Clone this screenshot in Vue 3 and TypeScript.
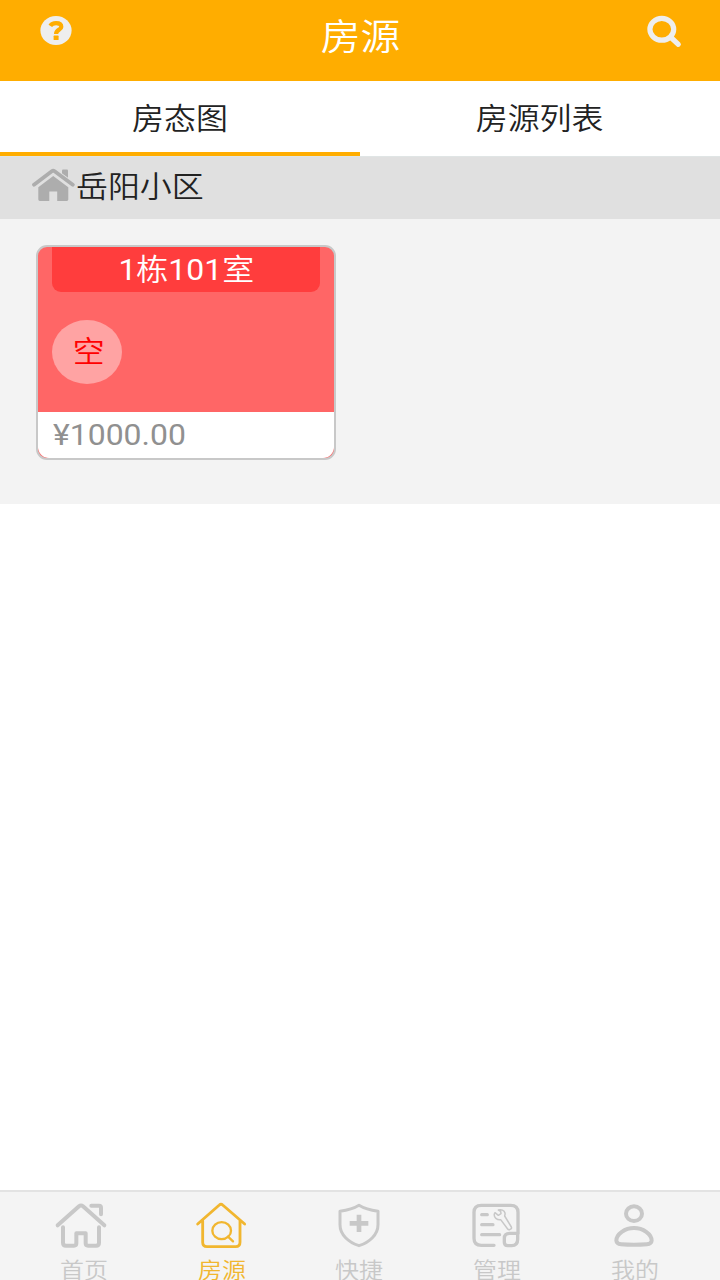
<script setup lang="ts">
interface NavItem {
  id: string
  label: string
  active: boolean
}

const tabs: string[] = ['房态图', '房源列表']
const nav: NavItem[] = [
  { id: 'home', label: '首页', active: false },
  { id: 'listing', label: '房源', active: true },
  { id: 'quick', label: '快捷', active: false },
  { id: 'manage', label: '管理', active: false },
  { id: 'mine', label: '我的', active: false },
]
</script>

<template>
  <div class="screen">
    <header class="header">
      <svg class="help" viewBox="0 0 32 30" preserveAspectRatio="none">
        <ellipse cx="16" cy="15.4" rx="15.6" ry="14.5" fill="#eeeeee" />
        <path d="M10.3 10.8C11.5 8.9 13.6 8.1 16.1 8.1C19.1 8.1 21.3 9.4 21.3 11.9C21.3 15 16.1 14.4 16.1 19" fill="none" stroke="#ffad00" stroke-width="4.2" />
        <rect x="13.6" y="20.6" width="5" height="4.5" rx="0.6" fill="#ffad00" />
      </svg>
      <h1 class="title"><span class="wide">房源</span></h1>
      <svg class="search" viewBox="0 0 36 34">
        <g fill="none" stroke="#eeeeee" stroke-width="5.2">
          <ellipse cx="14.8" cy="14.3" rx="11.9" ry="10.9" />
          <path d="M24 22.5L31.3 29.3" stroke-linecap="round" />
        </g>
      </svg>
    </header>

    <nav class="tabs">
      <div v-for="(tab, i) in tabs" :key="tab" class="tab" :class="{ selected: i === 0 }">
        <span class="wide">{{ tab }}</span>
      </div>
    </nav>

    <section class="community">
      <svg class="house" viewBox="0 0 44 34">
        <path d="M30 2.5Q30 1.5 31 1.5H35Q36 1.5 36 2.5V12L30 7Z" fill="#adadad" />
        <path d="M6.3 19.3L21.2 8.1L36.3 19.3V31.5Q36.3 32.9 34.8 32.9H25.2V23.5H17.3V32.9H7.8Q6.3 32.9 6.3 31.5Z" fill="#adadad" />
        <path d="M2 16.7L19.8 3.2Q21.2 2.2 22.6 3.2L40.8 16.7" fill="none" stroke="#e0e0e0" stroke-width="5.6" />
        <path d="M2 16.7L19.8 3.2Q21.2 2.2 22.6 3.2L40.8 16.7" fill="none" stroke="#adadad" stroke-width="3.8" stroke-linejoin="round" stroke-linecap="round" />
      </svg>
      <span class="wide left">岳阳小区</span>
    </section>

    <main class="rooms">
      <article class="card">
        <div class="room-name"><span class="wide"><span class="number">1</span>栋<span class="number">101</span>室</span></div>
        <div class="status"><span class="wide">空</span></div>
        <div class="price"><span class="wide left number">¥1000.00</span></div>
      </article>
    </main>

    <footer class="bottom">
      <div v-for="item in nav" :key="item.id" class="nav-item" :class="[item.id, { active: item.active }]">
        <svg v-if="item.id === 'home'" viewBox="72 60 162 150">
          <g stroke-width="12">
            <path d="M83 136L147 79Q153 74 159 79L223 136M184 77H207Q213 77 213 83V103" />
            <path d="M99 142V188Q99 197 108 197H132Q139 197 139 190V160H167V190Q167 197 174 197H198Q207 197 207 188V142" />
          </g>
        </svg>
        <svg v-else-if="item.id === 'listing'" viewBox="493 60 162 150">
          <g stroke-width="8.5">
            <path d="M504 132L569 75Q574 70 579 75L645 132M519 123V187Q519 200 532 200H618Q631 200 631 187V123" />
            <ellipse cx="576" cy="152" rx="28" ry="25.5" stroke-width="7" />
            <path d="M595 170L610 184" stroke-width="7" />
          </g>
        </svg>
        <svg v-else-if="item.id === 'quick'" viewBox="65 60 162 150">
          <path d="M146 76Q167 89 203 94V134C203 164 177 187 146 197C115 187 89 164 89 134V94Q125 89 146 76Z" stroke-width="9" />
          <path class="plus" d="M118 130H174M146 104V156" stroke-width="14" />
        </svg>
        <svg v-else-if="item.id === 'manage'" viewBox="476 60 162 150">
          <path d="M551 196H513Q491 196 491 175V97Q491 76 513 76H601Q623 76 623 97V160" stroke-width="10" />
          <path d="M514 104H531M514 134H548M514 164H568" stroke-width="9.5" />
          <path d="M598 160H622V178Q622 197 604 197H592Q582 197 582 187V175Q582 160 598 160Z" stroke-width="10" />
          <path d="M564 90C572 87 582 91 584 99C585 103 583 106 583 108L603 141Q605 145 601 147L598 149Q594 150 592 147L571 119C560 120 550 113 552 102L554 98L564 106L572 101L571 94Z" stroke-width="4.5" />
        </svg>
        <svg v-else viewBox="80 60 162 150">
          <g stroke-width="12">
            <ellipse cx="161" cy="101" rx="24" ry="22" />
            <path d="M161 144C188 144 214 162 214 182Q213 192 200 193Q161 196 122 193Q109 192 108 182C108 162 134 144 161 144Z" />
          </g>
        </svg>
        <span class="wide nav-label">{{ item.label }}</span>
      </div>
    </footer>
  </div>
</template>

<style>
body {
  margin: 0;
}
</style>

<style scoped>
.screen {
  display: flex;
  flex-direction: column;
  box-sizing: border-box;
  width: 720px;
  height: 1280px;
  overflow: hidden;
  background: #fff;
  color: #222;
  font-family: Roboto, "Noto Sans CJK SC", sans-serif;
  font-size: 29.3px;
  font-weight: 350;
}
.wide {
  display: inline-block;
  white-space: nowrap;
  transform: scaleX(1.09);
}
.left {
  transform-origin: left center;
}
.number {
  font-weight: 400;
}
.header {
  display: flex;
  justify-content: space-between;
  align-items: flex-start;
  box-sizing: border-box;
  flex: none;
  height: 81px;
  padding: 15px 37px 0 40px;
  background: #ffad00;
}
.help {
  width: 32px;
  height: 30px;
}
.search {
  width: 36px;
  height: 34px;
}
.title {
  margin: 2px 0 0 2px;
  color: #fff;
  font-size: 36.5px;
  font-weight: 350;
  line-height: 42px;
}
.tabs {
  display: flex;
  flex: none;
  height: 75px;
  border-bottom: 1px solid #e0e5e5;
}
.tab {
  flex: 1;
  box-sizing: border-box;
  height: 75px;
  padding-top: 19px;
  line-height: 38px;
  text-align: center;
}
.selected {
  border-bottom: 4px solid #ffad00;
}
.community {
  display: flex;
  flex: none;
  box-sizing: border-box;
  height: 62px;
  padding: 11px 0 0 32px;
  background: #e0e0e0;
  line-height: 38px;
}
.house {
  width: 44px;
  height: 34px;
}
.rooms {
  box-sizing: border-box;
  flex: none;
  height: 285px;
  padding: 26px 36px;
  background: #f3f3f3;
}
.card {
  display: flex;
  flex-direction: column;
  box-sizing: border-box;
  width: 300px;
  height: 215px;
  border: 2px solid #c8c8c8;
  border-radius: 11px;
  overflow: hidden;
  background: #f66;
}
.room-name {
  height: 45px;
  margin: 0 14px;
  border-radius: 0 0 9px 9px;
  background: #ff3d3d;
  color: #fff;
  line-height: 46px;
  text-align: center;
}
.status {
  width: 70px;
  height: 64px;
  margin: 28px 0 0 14px;
  border-radius: 50%;
  background: #ffa3a3;
  color: #f00;
  line-height: 65px;
  text-align: center;
  text-indent: 2px;
}
.price {
  flex: none;
  height: 46px;
  margin-top: auto;
  padding-left: 15px;
  border-radius: 0 0 11px 11px;
  background: #fff;
  color: #909090;
  line-height: 47px;
}
.bottom {
  display: flex;
  box-sizing: border-box;
  flex: none;
  height: 90px;
  margin-top: auto;
  padding: 8px 16px 0 15px;
  border-top: 2px solid #e3e3e3;
  background: #f4f4f4;
}
.nav-item {
  display: flex;
  flex: 1;
  flex-direction: column;
  align-items: center;
  color: #c8c8c8;
}
.nav-item svg {
  flex: none;
  width: 54px;
  height: 50px;
  fill: none;
  stroke: currentColor;
  stroke-linecap: round;
  stroke-linejoin: round;
}
.nav-item .plus {
  stroke-linecap: butt;
}
.home svg {
  margin-right: 6px;
}
.listing svg,
.quick svg {
  margin-right: 1px;
}
.manage svg,
.mine svg {
  margin-right: 3px;
}
.nav-item.active {
  color: #f1b62f;
}
.nav-label {
  margin-top: 6px;
  font-size: 22px;
  line-height: 30px;
}
</style>
